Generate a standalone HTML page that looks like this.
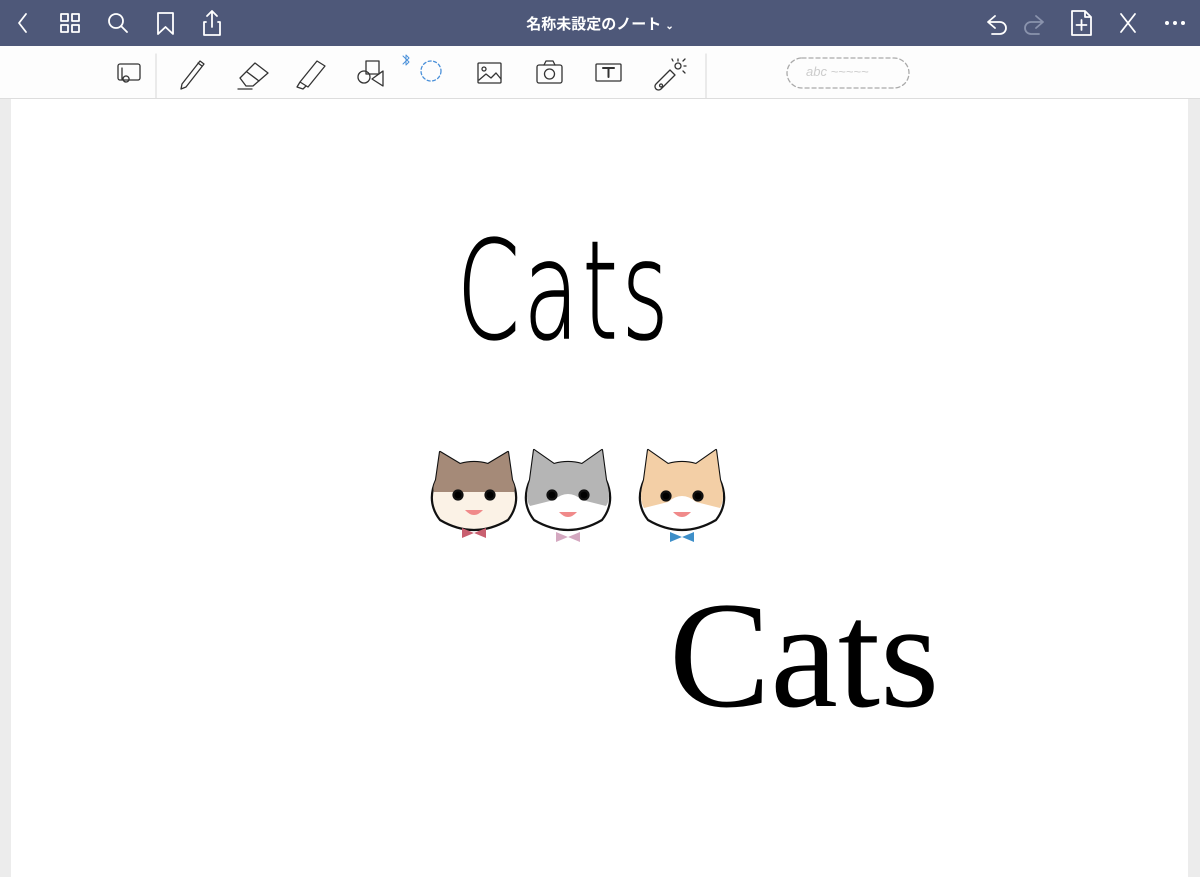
<!DOCTYPE html>
<html><head><meta charset="utf-8"><style>
body{margin:0;width:1200px;height:877px;overflow:hidden;background:#ececec;font-family:"Liberation Sans","Noto Sans CJK JP",sans-serif;position:relative}
.hdr{position:absolute;left:0;top:0;width:1200px;height:46px;background:#4e5879}
.tb{position:absolute;left:0;top:46px;width:1200px;height:52px;background:#fdfdfd;border-bottom:1px solid #ddd}
.page{position:absolute;left:11px;top:99px;width:1177px;height:778px;background:#fff}
.title{position:absolute;left:0;width:1200px;top:13px;text-align:center;color:#fff;font-size:15px;font-weight:bold}
svg{position:absolute}
</style></head><body>
<div class="hdr"></div>
<div class="title">名称未設定のノート <span style="font-size:10px">⌄</span></div>
<svg width="1200" height="46" style="left:0;top:0" fill="none" stroke="#fff" stroke-width="1.8" stroke-linecap="round" stroke-linejoin="round">
<path d="M26 14 L19 23 L26 32"/>
<rect x="61" y="14" width="7" height="7"/><rect x="72" y="14" width="7" height="7"/><rect x="61" y="25" width="7" height="7"/><rect x="72" y="25" width="7" height="7"/>
<circle cx="116" cy="21" r="7"/><path d="M121 26 L127 32"/>
<path d="M158 13 H173 V34 L165.5 27 L158 34 Z"/>
<path d="M206 22 H204 V35 H220 V22 H218 M212 27 V11 M207 16 L212 11 L217 16"/>
<path d="M995 16 L988 22 L995 28 M988 22 H1000 A6 6 0 0 1 1000 34 H992"/>
<path stroke="#8a93ad" d="M1036 16 L1043 22 L1036 28 M1043 22 H1031 A6 6 0 0 0 1031 34 H1039"/>
<path d="M1072 11 H1085 L1091 17 V35 H1072 Z M1085 11 V17 H1091 M1081.5 20 V30 M1076.5 25 H1086.5"/>
<path d="M1121 14 L1135 32 M1135 14 L1121 32"/>
</svg>
<svg width="40" height="10" style="left:1161px;top:18px"><circle cx="6" cy="5" r="2" fill="#fff"/><circle cx="14" cy="5" r="2" fill="#fff"/><circle cx="22" cy="5" r="2" fill="#fff"/></svg>
<div class="tb"></div>
<svg width="1200" height="52" style="left:0;top:46px" fill="none" stroke="#333" stroke-width="1.3" stroke-linecap="round" stroke-linejoin="round">
<rect x="118" y="18" width="22" height="16" rx="2"/><path d="M122 22 V33 M126 30 a3 3 0 1 0 0.1 0"/>
<path d="M156 8 V90" stroke="#e0e0e0"/>
<path d="M182 38 L200 15 L204 18 L186 41 L181 43 Z M198 17 L202 20"/>
<path d="M240 32 L255 17 L268 27 L253 40 H246 Z M247 26 L259 35 M238 43 H252"/>
<path d="M300 36 L317 15 L325 20 L308 41 Z M300 36 L297 41 L303 43 L306 40"/>
<rect x="366" y="15" width="13" height="13"/><circle cx="364" cy="31" r="6"/><path d="M383 25 V40 L372 33 Z"/>
<circle cx="431" cy="25" r="10" stroke="#4a90d9" stroke-dasharray="3 2.5"/><path d="M403 10 L409 16 L406 19 V9 L409 12 L403 18" stroke="#4a90d9" stroke-width="1"/>
<rect x="478" y="17" width="23" height="20" rx="1"/><circle cx="484" cy="23" r="2"/><path d="M479 34 L486 28 L491 32 L496 27 L501 33"/>
<rect x="537" y="19" width="25" height="18" rx="2"/><path d="M544 19 L546 15 H553 L555 19"/><circle cx="549.5" cy="28" r="5"/>
<rect x="596" y="18" width="25" height="17" rx="1"/><path d="M603 22 H614 M608.5 22 V31" stroke-width="2"/>
<path d="M656 38 L670 24 L675 29 L661 43 A3 3 0 0 1 656 38 Z M661 38 a1.5 1.5 0 1 0 0.1 0"/><circle cx="678" cy="20" r="3"/><path d="M678 13 V15 M684 20 H686 M683 15 L685 13 M673 15 L672 13 M683 25 L685 27"/>
<path d="M706 8 V90" stroke="#e0e0e0"/>
<rect x="787" y="12" width="122" height="30" rx="15" stroke="#aaa" stroke-dasharray="4 3"/>
</svg>
<div style="position:absolute;left:806px;top:64px;color:#ccc;font-size:13px;font-style:italic">abc ~~~~~</div>
<div class="page"></div>
<div style="position:absolute;left:457px;top:224px;font-size:136px;font-family:'DejaVu Sans','Liberation Sans',sans-serif;font-weight:300;letter-spacing:6px;color:#000;line-height:1;transform:scaleX(0.66);transform-origin:left;-webkit-text-stroke:1.5px #000">Cats</div>
<div style="position:absolute;left:669px;top:579px;font-size:152px;font-family:'Liberation Serif',serif;color:#000;line-height:1">Cats</div>
<svg width="320" height="120" style="left:420px;top:440px" stroke="#111" stroke-width="2.2" stroke-linejoin="round">
<g transform="translate(54,0)">
<path d="M-38 40 L-34 12 L-14 24 Q0 20 14 24 L34 12 L38 40 Q48 62 34 80 Q0 100 -34 80 Q-48 62 -38 40Z" fill="#fbf2e6"/>
<path d="M-38 40 L-34 12 L-14 24 Q0 20 14 24 L34 12 L38 40 Q42 48 40 52 L-40 52 Q-42 48 -38 40Z" fill="#a58a78" stroke="none"/>
<circle cx="-16" cy="55" r="4.5" fill="#000"/><circle cx="16" cy="55" r="4.5" fill="#000"/>
<path d="M-9 70 Q0 80 9 70 Z" fill="#f08a8a" stroke="none"/>
<path d="M-12 88 L-12 98 L0 93 L12 98 L12 88 L0 93 Z" fill="#c96070" stroke="none"/>
</g>
<g transform="translate(148,0)">
<path d="M-38 40 L-34 10 L-14 24 Q0 20 14 24 L34 10 L38 40 Q48 62 34 80 Q0 100 -34 80 Q-48 62 -38 40Z" fill="#fff"/>
<path d="M-38 40 L-34 10 L-14 24 Q0 20 14 24 L34 10 L38 40 Q44 58 38 66 L14 60 Q0 48 -14 60 L-38 66 Q-44 58 -38 40Z" fill="#b5b5b5" stroke="none"/>
<circle cx="-16" cy="55" r="4.5" fill="#000"/><circle cx="16" cy="55" r="4.5" fill="#000"/>
<path d="M-9 72 Q0 82 9 72 Z" fill="#f08a8a" stroke="none"/>
<path d="M-12 92 L-12 102 L0 97 L12 102 L12 92 L0 97 Z" fill="#d4a8c0" stroke="none"/>
</g>
<g transform="translate(262,0)">
<path d="M-38 40 L-34 10 L-14 24 Q0 20 14 24 L34 10 L38 40 Q48 62 34 80 Q0 100 -34 80 Q-48 62 -38 40Z" fill="#fff"/>
<path d="M-38 40 L-34 10 L-14 24 Q0 20 14 24 L34 10 L38 40 Q44 58 38 68 L14 62 Q0 50 -14 62 L-38 68 Q-44 58 -38 40Z" fill="#f3cfa6" stroke="none"/>
<circle cx="-16" cy="56" r="4.5" fill="#000"/><circle cx="16" cy="56" r="4.5" fill="#000"/>
<path d="M-9 72 Q0 82 9 72 Z" fill="#f08a8a" stroke="none"/>
<path d="M-12 92 L-12 102 L0 97 L12 102 L12 92 L0 97 Z" fill="#3e8fc9" stroke="none"/>
</g>
</svg>
</body></html>
